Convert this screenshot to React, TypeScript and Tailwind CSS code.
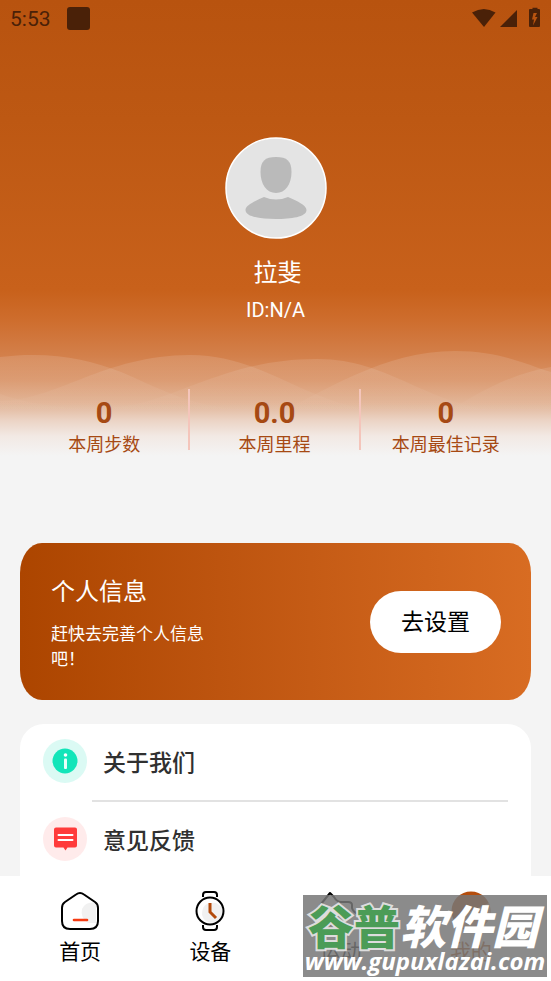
import type { ReactNode } from "react";

function StatusBar() {
  return (
    <div className="flex h-9 items-center justify-between pr-2 pl-[10px] text-[#4a2108]">
      <div className="flex items-center gap-4">
        <span className="pt-0.5 font-[Roboto,sans-serif] text-[21px] leading-6">5:53</span>
        <span className="size-[23px] rounded-[3px] bg-[#4a2108]" />
      </div>
      <svg width="71" height="22" viewBox="0 0 71 22" fill="currentColor" aria-hidden="true">
        <path d="M0 5.500Q12 -1.500 23.500 5.500L12 20Z" />
        <path d="M45 3V20H28Z" />
        <path fillRule="evenodd" d="M58 2h2.500V.800h5V2h1.500q1 0 1 1v16q0 1-1 1h-9q-1 0-1-1V3q0-1 1-1ZM61.500 6l-1.500 6.500h2l-1 6 4.500-8.500h-2.500L65 6Z" />
      </svg>
    </div>
  );
}

function Waves() {
  return (
    <svg className="absolute inset-x-0 bottom-0 h-[120px] w-full" viewBox="0 0 551 120" preserveAspectRatio="none" fillOpacity="0.120" aria-hidden="true">
      <path d="M0 13C50 7 88 15 121 28C155 42 190 63 240 65H551V120H0Z" fill="url(#fade)" />
      <path d="M0 57C55 57 105 11 190 11C270 11 310 68 400 68H551V120H0Z" fill="url(#fade)" />
      <path d="M0 50C40 64 100 70 145 58C195 44 240 15 317 15C395 15 430 68 520 68H551V120H0Z" fill="url(#fade)" />
      <path d="M240 90C320 50 380 7 455 7C500 7 525 20 551 28V120H240Z" fill="url(#fade)" />
      <path d="M440 72C480 48 510 30 551 23V120H440Z" fill="url(#fade)" />
      <defs>
        <linearGradient id="fade" x1="0" y1="0" x2="0" y2="76" gradientUnits="userSpaceOnUse">
          <stop offset="0.200" stopColor="#fff" />
          <stop offset="0.900" stopColor="#fff" stopOpacity="0" />
        </linearGradient>
      </defs>
    </svg>
  );
}

function Avatar() {
  return (
    <svg className="size-[102px]" viewBox="0 0 102 102" role="img" aria-label="头像">
      <circle cx="51" cy="51" r="50" fill="#e4e4e4" stroke="#fff" strokeWidth="1.500" />
      <path d="M51 20c11 0 15.500 4 15.500 15 0 12-6 21-15.500 21s-15.500-9-15.500-21c0-11 4.500-15 15.500-15Z" fill="#bababa" />
      <path d="M39 60q12 5 24 0c9 4 18.500 8 18.500 13 0 7-15.500 9-30.500 9s-30.500-2-30.500-9c0-5 9.500-9 18.500-13Z" fill="#bababa" />
    </svg>
  );
}

const stats = [
  { value: "0", label: "本周步数" },
  { value: "0.0", label: "本周里程" },
  { value: "0", label: "本周最佳记录" },
];

function Header() {
  return (
    <header className="relative h-[464px] shrink-0 bg-[linear-gradient(#b8530f_0px,#bd5813_120px,#c8611b_290px,#ce6d2d_320px,#d3804b_356px,#d99468_380px,#e1b293_402px,#ebd3c4_420px,#f2e9e4_436px,#f4f4f4_456px)]">
      <Waves />
      <div className="relative flex flex-col">
        <StatusBar />
        <div className="mt-[101px] flex flex-col items-center text-white">
          <Avatar />
          <h1 className="mt-[14px] pl-1 text-2xl leading-9">拉斐</h1>
          <p className="mt-[5px] font-[Roboto,sans-serif] text-[20px] leading-8">ID:N/A</p>
        </div>
        <dl className="mt-[63px] grid grid-cols-3 divide-x-2 divide-[#f4c5bb] px-5 text-[#a64913]">
          {stats.map((s) => (
            <div key={s.label} className="flex h-[61px] flex-col-reverse items-center justify-end">
              <dt className="text-[18px] leading-6 whitespace-nowrap">{s.label}</dt>
              <dd className="pt-1.5 font-[Roboto,sans-serif] text-[29px] leading-9 font-bold">{s.value}</dd>
            </div>
          ))}
        </dl>
      </div>
    </header>
  );
}

function ProfileCard() {
  return (
    <section className="mx-5 mt-[79px] flex h-[157px] shrink-0 items-center justify-between rounded-[22px/30px] bg-linear-to-r from-[#ac4500] to-[#d86c22] pr-[30px] pl-[31px] text-white">
      <div className="w-[160px] pb-0.5">
        <h2 className="text-2xl leading-9">个人信息</h2>
        <p className="mt-3 text-[17px] leading-[25px]">赶快去完善个人信息吧！</p>
      </div>
      <button type="button" className="h-[62px] w-[131px] rounded-full bg-white pb-0.5 text-[23px] text-black">
        去设置
      </button>
    </section>
  );
}

function MenuRow({ icon, label, divider }: { icon: ReactNode; label: string; divider?: boolean }) {
  return (
    <li>
      <button type="button" className="flex h-[76px] w-full items-center gap-4 px-[23px] pb-0.5 text-[23px] font-medium text-[#303030]">
        {icon}
        {label}
      </button>
      {divider && <hr className="mr-[23px] ml-[72px] border-t-2 border-[#e2e2e2]" />}
    </li>
  );
}

function Menu() {
  return (
    <ul className="mx-5 mt-6 h-[240px] shrink-0 rounded-3xl bg-white">
      <MenuRow
        divider
        label="关于我们"
        icon={
          <svg width="44" height="44" viewBox="0 0 44 44" aria-hidden="true">
            <circle cx="22" cy="22" r="22" fill="#dbfaf4" />
            <circle cx="22" cy="22" r="12.500" fill="#12e5b9" />
            <circle cx="22.500" cy="16" r="1.800" fill="#fff" />
            <rect x="21" y="19.500" width="3" height="10.500" rx="1" fill="#e6fff9" />
          </svg>
        }
      />
      <MenuRow
        label="意见反馈"
        icon={
          <svg width="44" height="44" viewBox="0 0 44 44" aria-hidden="true">
            <circle cx="22" cy="22" r="22" fill="#ffebeb" />
            <path d="M13 10.500h19q2 0 2 2v16q0 2-2 2h-7.500L22.500 33.500l-2-3H13q-2 0-2-2v-16q0-2 2-2Z" fill="#ff3b3b" />
            <path d="M15.500 18h14M15.500 23h14" stroke="#fff" strokeWidth="2" strokeLinecap="round" />
          </svg>
        }
      />
    </ul>
  );
}

const tabs = [
  {
    label: "首页",
    color: "text-black",
    icon: (
      <>
        <path d="M36 12v20H28Q20 26 22 18Q26 10 36 12Z" fill="#f1f1f1" />
        <path d="M16 3.500q4-3 8 0L35 11q3 2 3 6v13q0 8-8 8H10q-8 0-8-8V17q0-4 3-6Z" fill="none" stroke="#000" strokeWidth="2" />
        <path d="M14 29h13" stroke="#f53b12" strokeWidth="2.600" strokeLinecap="round" />
      </>
    ),
  },
  {
    label: "设备",
    color: "text-black",
    icon: (
      <>
        <path d="M12 24Q12 10 26 12L32 16V26L24 32Q14 32 12 24Z" fill="#f1f1f1" />
        <path d="M13 6V4q0-3 3-3h8q3 0 3 3v2M13 34v2q0 3 3 3h8q3 0 3-3v-2" fill="none" stroke="#000" strokeWidth="2" />
        <circle cx="20" cy="20" r="13.500" fill="none" stroke="#000" strokeWidth="2" />
        <path d="M20 12v9l6 6" fill="none" stroke="#b34a0b" strokeWidth="3" />
      </>
    ),
  },
  {
    label: "运动",
    color: "text-black",
    icon: (
      <>
        <path d="M9 2 0 13q-2 2 0 4l19 16q2 2 6 2h13q4 0 4-5t-5-7q-5-2-6-6V14q0-3-4-3h-7q-4 0-7-5Z" fill="none" stroke="#000" strokeWidth="2" strokeLinejoin="round" />
        <path d="M0 34h14" stroke="#d45e22" strokeWidth="3" />
      </>
    ),
  },
  {
    label: "我的",
    color: "text-[#ad4907]",
    icon: (
      <>
        <circle cx="20" cy="20" r="19.500" fill="#b54d0c" />
        <path d="M2 28Q20 20 38 12Q43 28 30 37Q18 42 8 35Z" fill="#e8b394" />
      </>
    ),
  },
];

function Watermark() {
  return (
    <div className="pointer-events-none absolute right-1 bottom-1 flex h-[82px] w-[244px] flex-col items-center bg-[#777]/85 text-white">
      <div className="mt-1.5 pr-1 text-[46px] leading-[46px] font-black whitespace-nowrap">
        <span className="text-[#4b9c57] [-webkit-text-stroke:4px_#ddd] [paint-order:stroke_fill]">谷普</span>
        <span className="italic">软件园</span>
      </div>
      <div className="font-['Open_Sans',sans-serif] text-[24px] leading-7 font-bold whitespace-nowrap italic">www.gupuxlazai.com</div>
    </div>
  );
}

function TabBar() {
  return (
    <nav className="relative h-[105px] shrink-0 bg-white px-[15px]">
      <div className="grid grid-cols-4">
        {tabs.map((t) => (
          <button key={t.label} type="button" className={`flex flex-col items-center pt-[15px] ${t.color}`}>
            <svg className="overflow-visible" width="40" height="40" viewBox="0 0 40 40" aria-hidden="true">
              {t.icon}
            </svg>
            <span className="mt-[3px] text-[21px] leading-8">{t.label}</span>
          </button>
        ))}
      </div>
      <Watermark />
    </nav>
  );
}

export default function App() {
  return (
    <div className="flex h-screen flex-col bg-[#f4f4f4] font-['Noto_Sans_CJK_SC',sans-serif]">
      <main className="flex min-h-0 flex-1 flex-col overflow-hidden">
        <Header />
        <ProfileCard />
        <Menu />
      </main>
      <TabBar />
    </div>
  );
}
